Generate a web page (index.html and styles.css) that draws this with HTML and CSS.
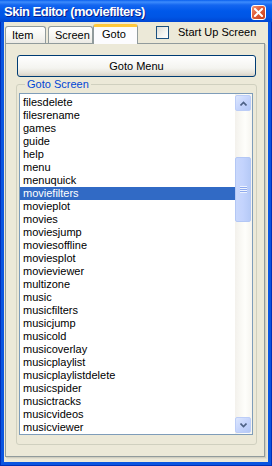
FILE: index.html
```html
<!DOCTYPE html>
<html lang="en">

<head>
  <meta charset="UTF-8">
  <title>Skin Editor (moviefilters)</title>
  <link rel="stylesheet" href="styles.css">
</head>

<body>
  <div class="window">
    <div class="titlebar">
      <span class="title">Skin Editor (moviefilters)</span>
      <span class="close">
        <svg width="9" height="9" viewBox="0 0 9 9"><path d="M1 1 L8 8 M8 1 L1 8" stroke="#fff" stroke-width="2" stroke-linecap="square"/></svg>
      </span>
    </div>

    <div class="client">
      <div class="tabrow">
        <div class="tab tab-item">Item</div>
        <div class="tab tab-screen">Screen</div>
        <div class="tab active">Goto</div>
        <label class="check"><span class="box"></span>Start Up Screen</label>
      </div>

      <div class="panel">
        <button class="btn">Goto Menu</button>

        <fieldset class="group">
          <legend>Goto Screen</legend>
          <div class="listbox">
            <ul class="items">
              <li>filesdelete</li>
              <li>filesrename</li>
              <li>games</li>
              <li>guide</li>
              <li>help</li>
              <li>menu</li>
              <li>menuquick</li>
              <li class="selected">moviefilters</li>
              <li>movieplot</li>
              <li>movies</li>
              <li>moviesjump</li>
              <li>moviesoffline</li>
              <li>moviesplot</li>
              <li>movieviewer</li>
              <li>multizone</li>
              <li>music</li>
              <li>musicfilters</li>
              <li>musicjump</li>
              <li>musicold</li>
              <li>musicoverlay</li>
              <li>musicplaylist</li>
              <li>musicplaylistdelete</li>
              <li>musicspider</li>
              <li>musictracks</li>
              <li>musicvideos</li>
              <li>musicviewer</li>
            </ul>
            <div class="scrollbar">
              <div class="sbtn">
                <svg width="7" height="5" viewBox="0 0 7 5"><path d="M0.5 4.5 L3.5 1.5 L6.5 4.5" fill="none" stroke="#4d6185" stroke-width="1.6"/></svg>
              </div>
              <div class="track">
                <div class="thumb"><span class="grip"></span></div>
              </div>
              <div class="sbtn">
                <svg width="7" height="5" viewBox="0 0 7 5"><path d="M0.5 0.5 L3.5 3.5 L6.5 0.5" fill="none" stroke="#4d6185" stroke-width="1.6"/></svg>
              </div>
            </div>
          </div>
        </fieldset>
      </div>
    </div>
  </div>
</body>

</html>
```

FILE: styles.css
```css
body {
  margin: 0;
  font-family: "Liberation Sans", Arial, sans-serif;
  font-size: 11px;
}

.window {
  width: 272px;
  height: 466px;
  box-sizing: border-box;
  display: flex;
  flex-direction: column;
  background-color: #0a55e0;
  box-shadow: inset 1px 0 #0030b8, inset -1px 0 #0030b8, inset 0 -1px #0030b8;
}

.titlebar {
  height: 22px;
  flex: none;
  display: flex;
  align-items: center;
  padding: 0 6px 0 4px;
  background: linear-gradient(to bottom, #0a5fee 0, #3d8cfd 2px, #1466f0 5px, #0058ea 11px, #0055e5 17px, #0046d2 22px);
}

.title {
  color: #fff;
  font-weight: bold;
  font-size: 13px;
  letter-spacing: -0.5px;
  text-shadow: 1px 1px #0a1e8a;
  margin-top: 1px;
}

.close {
  margin-left: auto;
  margin-top: 3px;
  width: 15px;
  height: 15px;
  box-sizing: border-box;
  border: 1px solid #fff;
  border-radius: 3px;
  background: linear-gradient(135deg, #f09a7c 0, #e2603c 40%, #c8401c 100%);
  display: flex;
  align-items: center;
  justify-content: center;
}

.client {
  flex: 1;
  margin: 0 4px 4px;
  background-color: #ece9d8;
  display: flex;
  flex-direction: column;
}

.tabrow {
  height: 21px;
  flex: none;
  display: flex;
  align-items: flex-end;
  padding-left: 1px;
  position: relative;
  z-index: 1;
}

.tab {
  box-sizing: border-box;
  height: 17px;
  border: 1px solid #919b9c;
  border-bottom: none;
  border-radius: 3px 3px 0 0;
  background: linear-gradient(to bottom, #ffffff 0, #f7f7f3 50%, #ecebe5 100%);
  line-height: 16px;
  padding-left: 6px;
}

.tab-item {
  width: 41px;
  margin-right: 2px;
}

.tab-screen {
  width: 45px;
}

.active {
  width: 45px;
  height: 20px;
  margin-bottom: -1px;
  padding-left: 8px;
  line-height: 15px;
  background: #fcfcfe;
  border-top: 3px solid #ffc83c;
  box-shadow: inset 0 -1px 0 #fcfcfe;
}

.check {
  align-self: flex-start;
  margin-top: 4px;
  margin-left: 18px;
  display: flex;
  align-items: center;
  gap: 9px;
  line-height: 13px;
}

.box {
  width: 13px;
  height: 13px;
  box-sizing: border-box;
  border: 1px solid #1c5180;
  background: linear-gradient(135deg, #dcdcd7 0, #f5f5f1 60%, #ffffff 100%);
}

.panel {
  flex: 1;
  margin: 0 3px 5px 1px;
  border: 1px solid #919b9c;
  box-shadow: 1px 1px 0 #d0cebf, 2px 2px 0 #e2dfd0;
  padding: 11px 8px 0 11px;
  display: flex;
  flex-direction: column;
}

.btn {
  height: 22px;
  flex: none;
  border: 1px solid #003c74;
  border-radius: 3px;
  background: linear-gradient(to bottom, #ffffff 0, #f4f4f0 60%, #e6e3da 85%, #d6d0c5 100%);
  font-family: "Liberation Sans", Arial, sans-serif;
  font-size: 11px;
  color: #000;
  padding: 0;
}

.group {
  margin: 1px -1px 0;
  padding: 2px 3px 9px 2px;
  border: 1px solid #d0d0bf;
  border-radius: 3px;
}

.group legend {
  color: #0046d5;
  padding: 0 2px;
  margin-left: 6px;
  line-height: 13px;
}

.listbox {
  height: 342px;
  box-sizing: border-box;
  border: 1px solid #7f9db9;
  background: #fff;
  display: flex;
}

.items {
  flex: 1;
  list-style: none;
  margin: 0;
  padding: 2px 0 0;
  overflow: hidden;
}

.items li {
  height: 13px;
  line-height: 13px;
  padding-left: 3px;
  white-space: nowrap;
}

.items .selected {
  background: #316ac5;
  color: #fff;
}

.scrollbar {
  width: 17px;
  flex: none;
  box-sizing: border-box;
  padding: 1px 1px 1px 0;
  display: flex;
  flex-direction: column;
  background: linear-gradient(to right, #f3f1ec 0, #fefefb 60%, #f5f4ef 100%);
}

.sbtn {
  height: 16px;
  flex: none;
  box-sizing: border-box;
  border: 1px solid #bccdf7;
  border-radius: 2px;
  background: linear-gradient(135deg, #dde7fe 0, #c6d5fc 50%, #b4c8f6 100%);
  display: flex;
  align-items: center;
  justify-content: center;
}

.track {
  flex: 1;
}

.thumb {
  margin-top: 46px;
  height: 65px;
  box-sizing: border-box;
  border: 1px solid #b3c7f5;
  border-radius: 2px;
  background: linear-gradient(to right, #c9d8fc 0, #c3d3fd 50%, #b6caf7 100%);
  display: flex;
  align-items: center;
  justify-content: center;
}

.grip {
  width: 7px;
  height: 7px;
  background: repeating-linear-gradient(to bottom, #eef3fe 0, #eef3fe 1px, #8faaee 1px, #8faaee 2px);
}
```
